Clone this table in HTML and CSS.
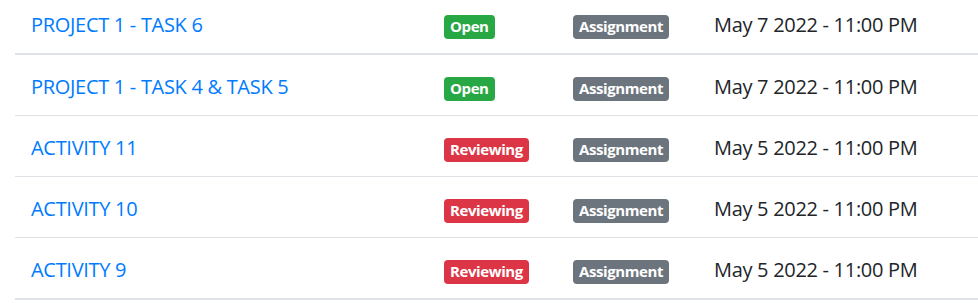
FILE: index.html
```html
<!DOCTYPE html>
<html lang="en">
<head>
<meta charset="utf-8">
<title>Tasks</title>
<link rel="stylesheet" href="styles.css">
</head>
<body>
<div class="wrap">
<table class="tasks">
  <colgroup>
    <col class="c-title"><col class="c-status"><col class="c-type"><col class="c-date">
  </colgroup>
  <tbody>
    <tr class="first">
      <td><a href="#">PROJECT 1 - TASK 6</a></td>
      <td><span class="badge open">Open</span></td>
      <td><span class="badge type">Assignment</span></td>
      <td class="date">May 7 2022 - 11:00 PM</td>
    </tr>
  </tbody>
  <tbody class="rest">
    <tr>
      <td><a href="#">PROJECT 1 - TASK 4 &amp; TASK 5</a></td>
      <td><span class="badge open">Open</span></td>
      <td><span class="badge type">Assignment</span></td>
      <td class="date">May 7 2022 - 11:00 PM</td>
    </tr>
    <tr>
      <td><a href="#">ACTIVITY 11</a></td>
      <td><span class="badge review">Reviewing</span></td>
      <td><span class="badge type">Assignment</span></td>
      <td class="date">May 5 2022 - 11:00 PM</td>
    </tr>
    <tr>
      <td><a href="#">ACTIVITY 10</a></td>
      <td><span class="badge review">Reviewing</span></td>
      <td><span class="badge type">Assignment</span></td>
      <td class="date">May 5 2022 - 11:00 PM</td>
    </tr>
    <tr>
      <td><a href="#">ACTIVITY 9</a></td>
      <td><span class="badge review">Reviewing</span></td>
      <td><span class="badge type">Assignment</span></td>
      <td class="date">May 5 2022 - 11:00 PM</td>
    </tr>
  </tbody>
</table>
</div>
</body>
</html>
```

FILE: styles.css
```css
html, body {
  margin: 0;
  padding: 0;
  background: #fff;
  overflow: hidden;
}
body {
  font-family: "Open Sans", "Noto Sans", sans-serif;
  font-size: 20px;
  color: #212529;
}
.wrap {
  padding-left: 15px;
  margin-top: -8px;
}
.tasks {
  width: 100%;
  border-collapse: collapse;
  table-layout: fixed;
}
.c-title { width: 413px; }
.c-status { width: 129px; }
.c-type { width: 141px; }
.tasks td {
  padding: 3px 16px 0;
  height: 57px;
  border-top: 1px solid #dee2e6;
  vertical-align: middle;
  line-height: 1.5;
  white-space: nowrap;
  letter-spacing: -0.3px;
}
.tasks tbody.rest tr:first-child td {
  border-top: 2px solid #dee2e6;
}
.tasks tbody.rest tr:last-child td {
  border-bottom: 2px solid #dee2e6;
}
.tasks a {
  color: #007bff;
  text-decoration: none;
}
.badge {
  display: inline-block;
  font-size: 15px;
  font-weight: 700;
  line-height: 1;
  letter-spacing: -0.4px;
  padding: 4px 6px 5px;
  border-radius: 4px;
  color: #fff;
  vertical-align: 0;
}
.open { background: #28a745; }
.review { background: #dc3545; }
.type { background: #6c757d; }
```
